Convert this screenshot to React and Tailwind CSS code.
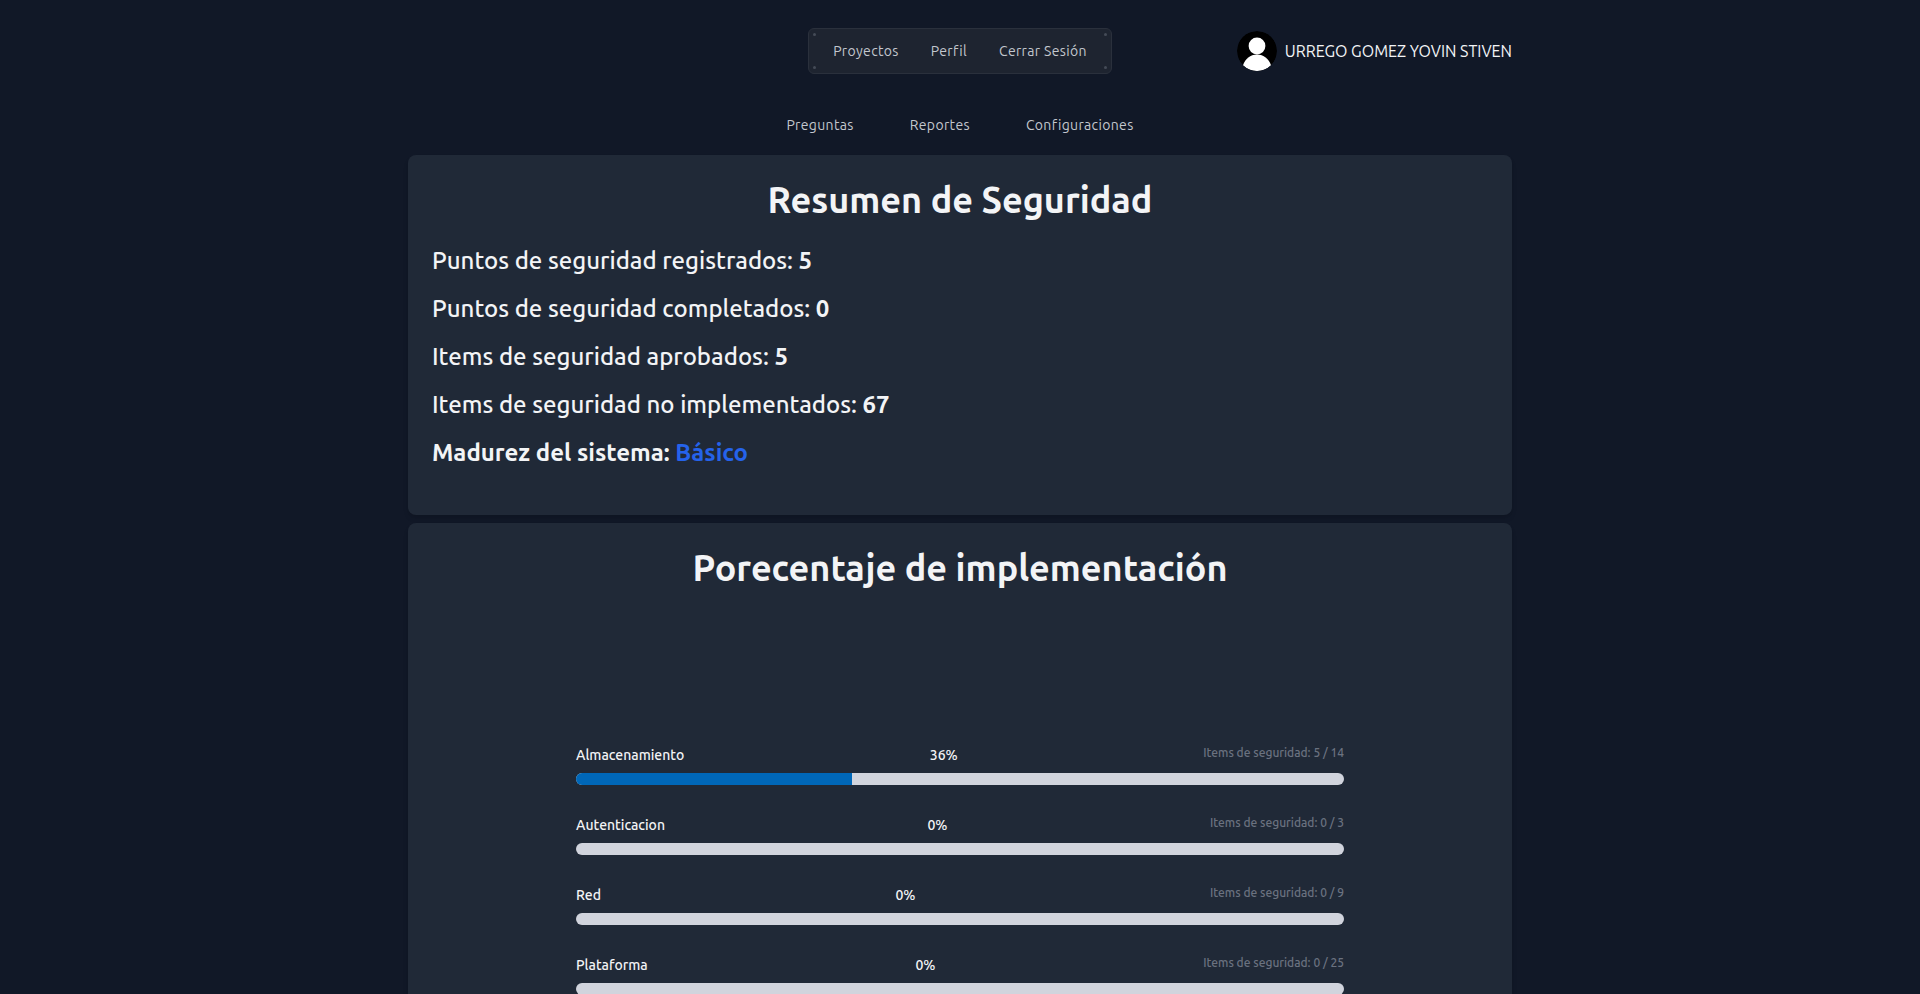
import React from "react";

const mainLinks = ["Proyectos", "Perfil", "Cerrar Sesión"];
const sectionLinks = ["Preguntas", "Reportes", "Configuraciones"];

const summary = [
  { label: "Puntos de seguridad registrados:", value: 5 },
  { label: "Puntos de seguridad completados:", value: 0 },
  { label: "Items de seguridad aprobados:", value: 5 },
  { label: "Items de seguridad no implementados:", value: 67 },
];

const categories = [
  { name: "Almacenamiento", done: 5, total: 14 },
  { name: "Autenticacion", done: 0, total: 3 },
  { name: "Red", done: 0, total: 9 },
  { name: "Plataforma", done: 0, total: 25 },
];

function Corner({ className }) {
  return <span className={`absolute size-[3px] rounded-full bg-[#454b57] ${className}`} />;
}

function Avatar() {
  return (
    <svg viewBox="0 0 40 40" className="size-10 shrink-0 rounded-full" aria-hidden="true">
      <circle cx="20" cy="20" r="20" fill="#000" />
      <circle cx="20" cy="15" r="8.4" fill="#fff" />
      <path d="M6 34.3C8.4 27.8 13.2 23.6 20 23.6S31.6 27.8 34 34.3A20 20 0 0 1 6 34.3Z" fill="#fff" />
    </svg>
  );
}

function Header() {
  return (
    <header className="grid grid-cols-[1fr_auto_1fr] items-center pt-7">
      <nav className="relative col-start-2 flex h-[46px] items-center rounded-md border border-[#2a303c] bg-[#1e2430] px-2">
        <Corner className="top-1 left-1" />
        <Corner className="top-1 right-1" />
        <Corner className="bottom-1 left-1" />
        <Corner className="right-1 bottom-1" />
        {mainLinks.map((link) => (
          <a key={link} href="#" className="px-4 text-sm tracking-wide text-[#c3c7ce]">
            {link}
          </a>
        ))}
      </nav>
      <div className="flex items-center justify-end gap-2">
        <Avatar />
        <span className="whitespace-nowrap text-gray-100">URREGO GOMEZ YOVIN STIVEN</span>
      </div>
    </header>
  );
}

function Card({ title, className, children }) {
  return (
    <section className={`rounded-lg bg-[#202937] px-6 pt-6 shadow-md ${className}`}>
      <h1 className="text-center text-4xl leading-[42px] font-bold">{title}</h1>
      {children}
    </section>
  );
}

function CategoryBar({ name, done, total }) {
  const percent = Math.round((done / total) * 100);
  return (
    <li>
      <div className="mb-2 flex items-start justify-between font-medium">
        <span className="text-sm">{name}</span>
        <span className="text-sm">{percent}%</span>
        <span className="text-xs text-[#6b7280]">
          Items de seguridad: {done} / {total}
        </span>
      </div>
      <div
        role="progressbar"
        aria-label={name}
        aria-valuenow={percent}
        aria-valuemin={0}
        aria-valuemax={100}
        className="h-3 overflow-hidden rounded-full bg-[#d1d4dd]"
      >
        <div className="h-full bg-[#0067b8]" style={{ width: `${percent}%` }} />
      </div>
    </li>
  );
}

export default function App() {
  return (
    <div className="min-h-screen bg-[#111827] font-['Ubuntu','Noto_Sans',sans-serif] text-gray-100">
      <div className="mx-auto max-w-6xl px-6">
        <Header />
        <nav className="mt-10 mb-5 flex justify-center gap-6 pt-px">
          {sectionLinks.map((link) => (
            <a key={link} href="#" className="px-4 text-sm tracking-wide text-[#c3c7ce]">
              {link}
            </a>
          ))}
        </nav>
        <main className="flex flex-col gap-2">
          <Card title="Resumen de Seguridad" className="pb-[46px]">
            <div className="mt-6 flex flex-col gap-4 text-2xl leading-8">
              {summary.map(({ label, value }) => (
                <p key={label} className="font-medium">
                  {label} <span className="font-bold">{value}</span>
                </p>
              ))}
              <p className="font-bold">
                Madurez del sistema: <span className="text-[#2563eb]">Básico</span>
              </p>
            </div>
          </Card>
          <Card title="Porecentaje de implementación" className="pb-6">
            <ul className="mx-auto mt-[156px] flex max-w-3xl flex-col gap-[30px]">
              {categories.map((category) => (
                <CategoryBar key={category.name} {...category} />
              ))}
            </ul>
          </Card>
        </main>
      </div>
    </div>
  );
}
